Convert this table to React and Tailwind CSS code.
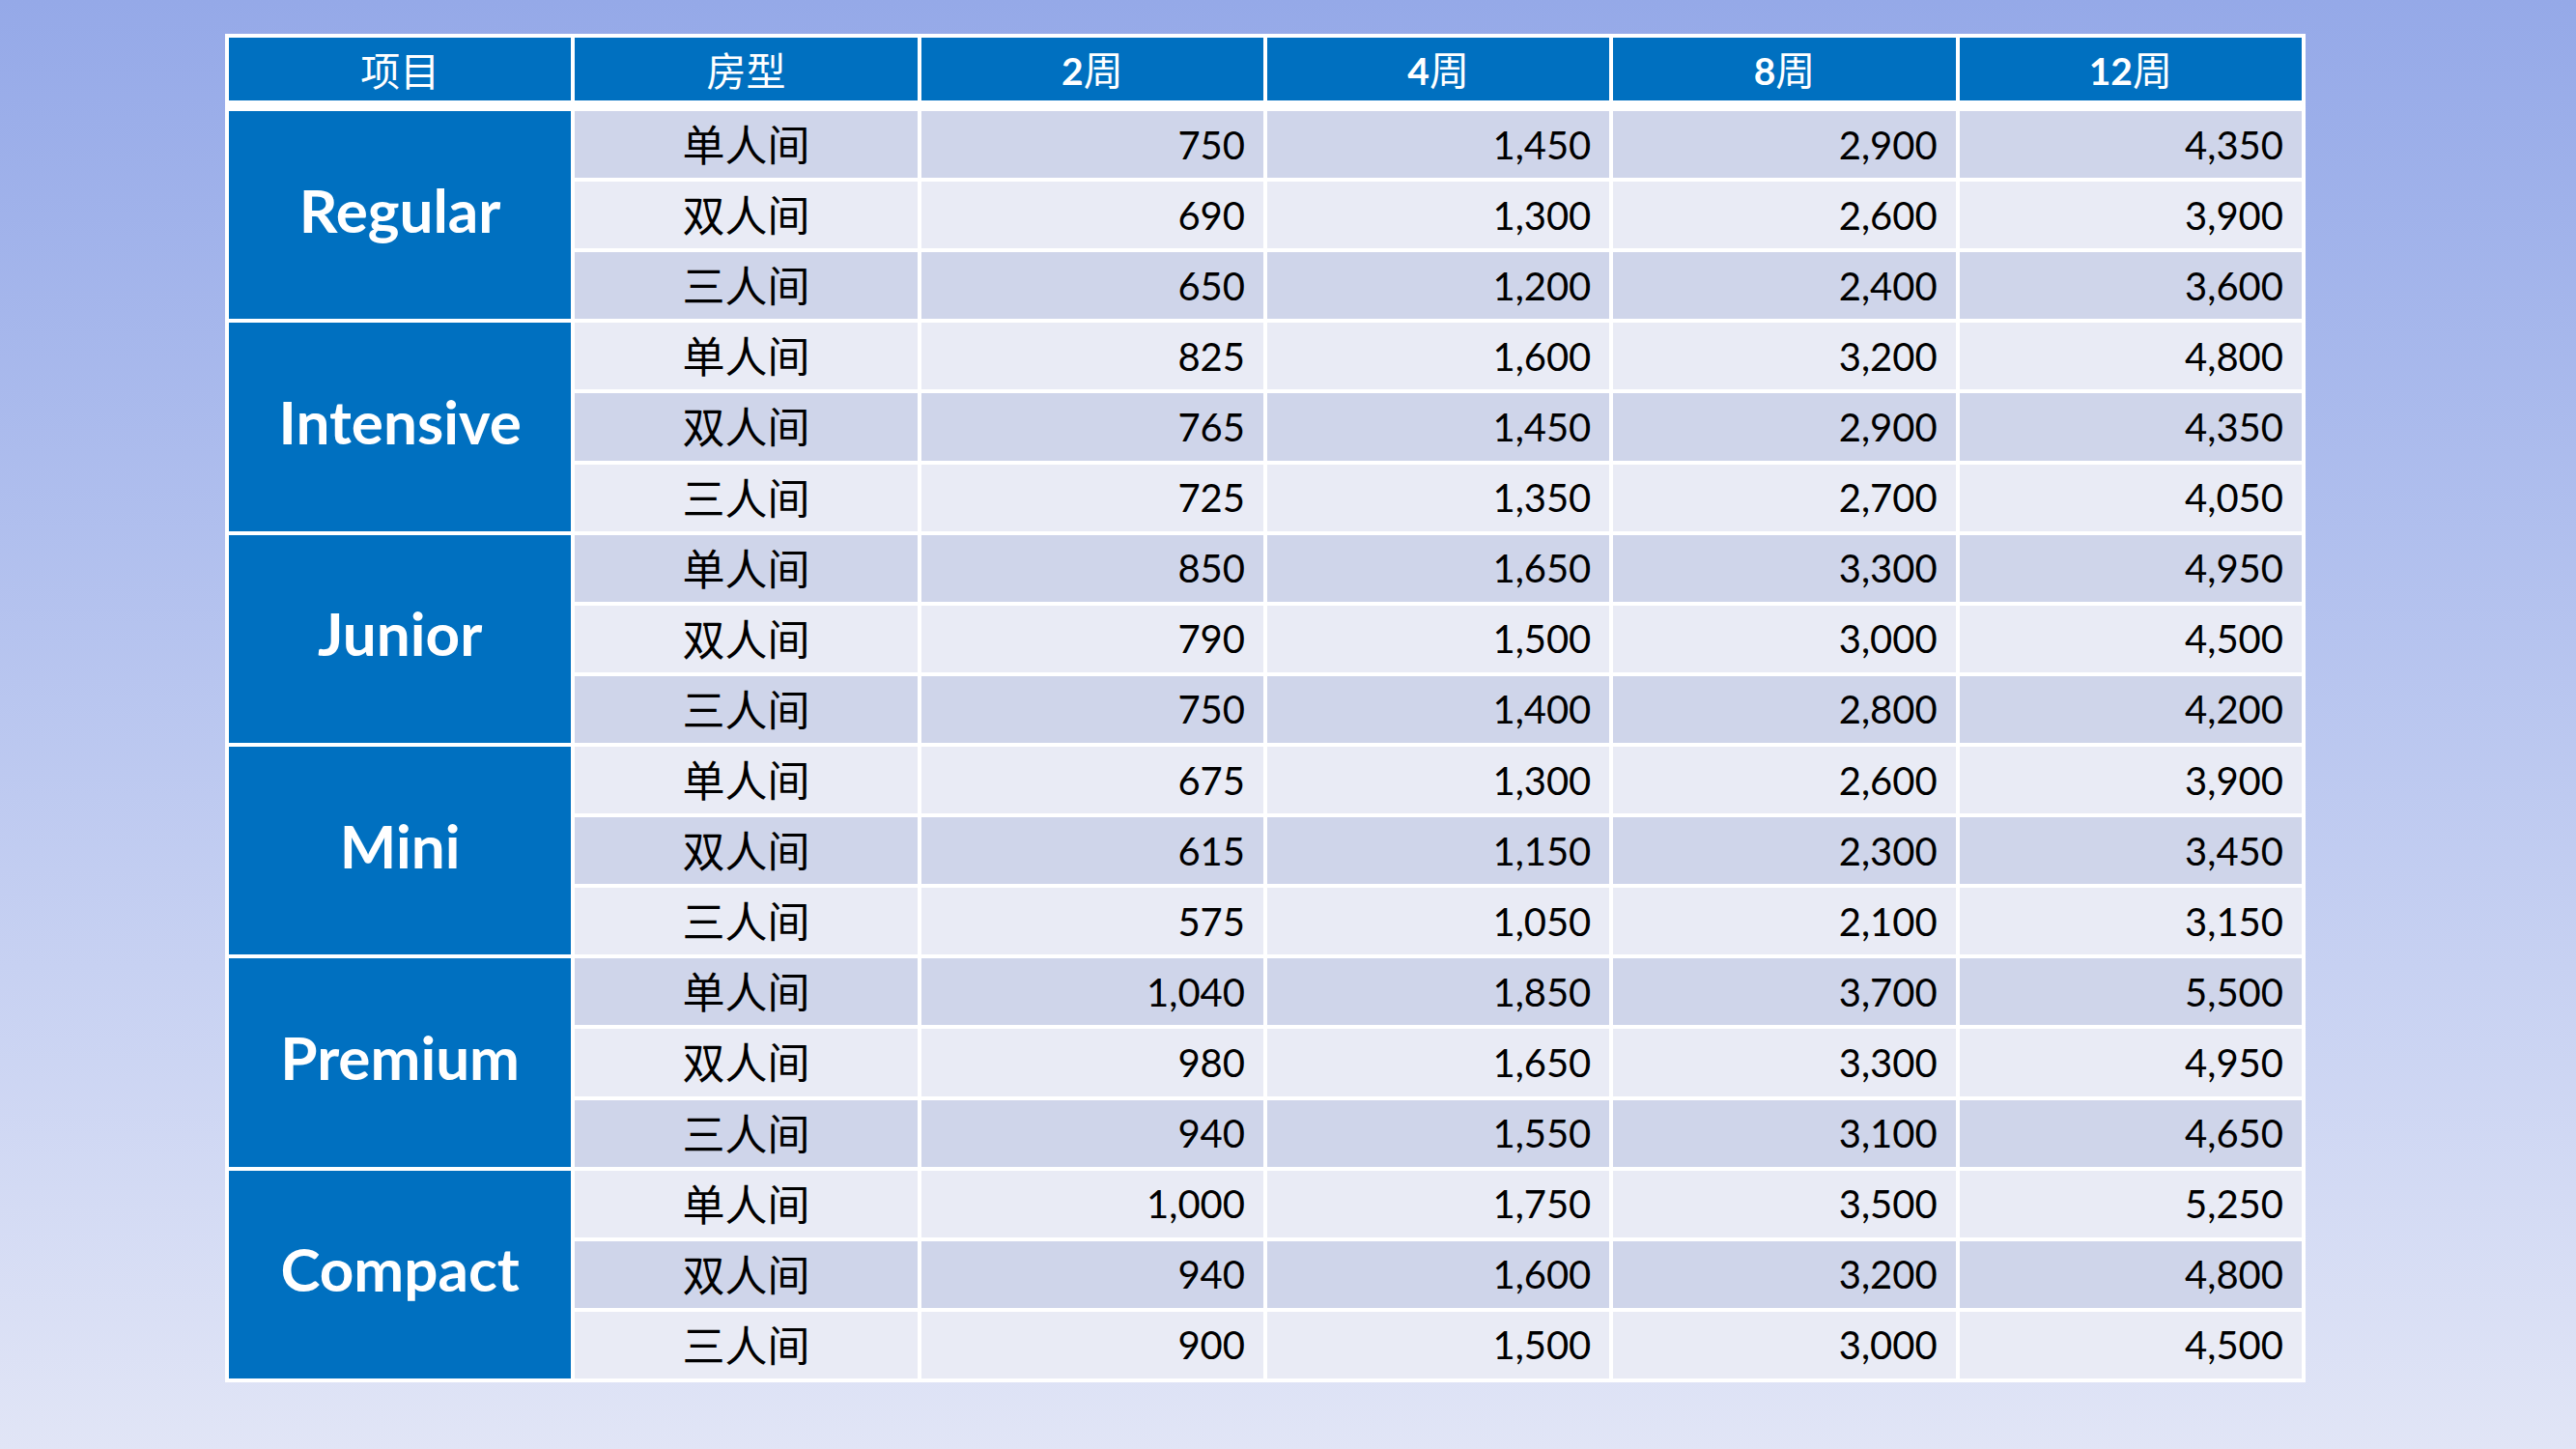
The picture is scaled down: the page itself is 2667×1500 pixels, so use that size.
import React from "react";

const groups = [
  { name: "Regular", rows: [["单人间", "750", "1,450", "2,900", "4,350"], ["双人间", "690", "1,300", "2,600", "3,900"], ["三人间", "650", "1,200", "2,400", "3,600"]] },
  { name: "Intensive", rows: [["单人间", "825", "1,600", "3,200", "4,800"], ["双人间", "765", "1,450", "2,900", "4,350"], ["三人间", "725", "1,350", "2,700", "4,050"]] },
  { name: "Junior", rows: [["单人间", "850", "1,650", "3,300", "4,950"], ["双人间", "790", "1,500", "3,000", "4,500"], ["三人间", "750", "1,400", "2,800", "4,200"]] },
  { name: "Mini", rows: [["单人间", "675", "1,300", "2,600", "3,900"], ["双人间", "615", "1,150", "2,300", "3,450"], ["三人间", "575", "1,050", "2,100", "3,150"]] },
  { name: "Premium", rows: [["单人间", "1,040", "1,850", "3,700", "5,500"], ["双人间", "980", "1,650", "3,300", "4,950"], ["三人间", "940", "1,550", "3,100", "4,650"]] },
  { name: "Compact", rows: [["单人间", "1,000", "1,750", "3,500", "5,250"], ["双人间", "940", "1,600", "3,200", "4,800"], ["三人间", "900", "1,500", "3,000", "4,500"]] },
];

const cjk = "font-['Noto_Sans_CJK_SC',sans-serif]";
const latin = "font-['Lato','Noto_Sans_CJK_SC',sans-serif]";

function Head({ label, num }) {
  return (
    <div className="bg-[#0070c0] flex items-center justify-center text-white">
      {num ? (
        <span className="flex items-baseline">
          <span className={`${latin} font-bold text-[39px] leading-none`}>{num}</span>
          <span className={`${cjk} text-[41px] leading-none`}>周</span>
        </span>
      ) : (
        <span className={`${cjk} text-[41px] leading-none`}>{label}</span>
      )}
    </div>
  );
}

export default function App() {
  let rowIndex = 0;
  const cells = [];
  groups.forEach((g, gi) => {
    g.rows.forEach((r, ri) => {
      const dark = rowIndex % 2 === 0;
      const bg = dark ? "bg-[#cfd5ea]" : "bg-[#e9ebf5]";
      if (ri === 0) {
        cells.push(
          <div
            key={`g${gi}`}
            className="row-span-3 bg-[#0070c0] flex items-center justify-center pb-[12px]"
          >
            <span className={`${latin} font-bold text-white text-[62px] leading-none`}>{g.name}</span>
          </div>
        );
      }
      cells.push(
        <div key={`t${gi}-${ri}`} className={`${bg} flex items-center justify-center pb-[3px]`}>
          <span className={`${cjk} text-[44px] leading-none text-black`}>{r[0]}</span>
        </div>
      );
      r.slice(1).forEach((v, vi) => {
        cells.push(
          <div key={`v${gi}-${ri}-${vi}`} className={`${bg} flex items-center justify-end pr-[19px]`}>
            <span className={`${latin} text-[40px] leading-none text-black`}>{v}</span>
          </div>
        );
      });
      rowIndex++;
    });
  });

  return (
    <div className="w-[2667px] h-[1500px] bg-gradient-to-b from-[#95a9e8] to-[#e1e5f6] pt-[35px] pl-[233px]">
      <div className="w-[2154px] bg-white p-[4px] flex flex-col">
        <div className="grid grid-cols-6 gap-x-[4px] h-[65px]">
          <Head label="项目" />
          <Head label="房型" />
          <Head num="2" />
          <Head num="4" />
          <Head num="8" />
          <Head num="12" />
        </div>
        <div className="grid grid-cols-6 grid-rows-[repeat(18,minmax(0,1fr))] gap-[4px] h-[1312px] mt-[11px]">
          {cells}
        </div>
      </div>
    </div>
  );
}
